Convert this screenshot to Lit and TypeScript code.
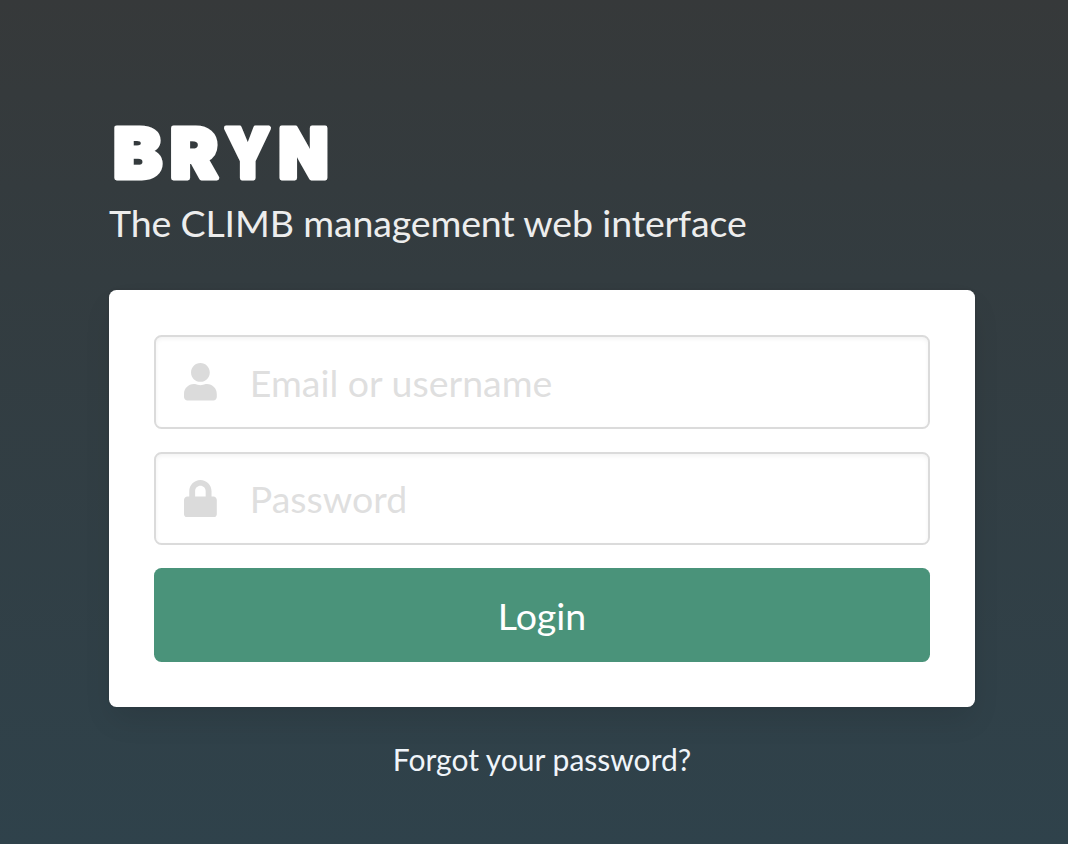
import { LitElement, html, css, svg } from "lit";
import { customElement, property } from "lit/decorators.js";

const ICONS = {
  user: svg`<path d="M224 256c70.7 0 128-57.3 128-128S294.7 0 224 0 96 57.3 96 128s57.3 128 128 128zm89.6 32h-16.7c-22.2 10.2-46.9 16-72.9 16s-50.6-5.8-72.9-16h-16.7C60.2 288 0 348.2 0 422.4V464c0 26.5 21.5 48 48 48h352c26.5 0 48-21.5 48-48v-41.6c0-74.2-60.2-134.4-134.4-134.4z"/>`,
  lock: svg`<path d="M400 224h-24v-72C376 68.2 307.8 0 224 0S72 68.2 72 152v72H48c-26.5 0-48 21.5-48 48v192c0 26.5 21.5 48 48 48h352c26.5 0 48-21.5 48-48V272c0-26.5-21.5-48-48-48zm-104 0H152v-72c0-39.7 32.3-72 72-72s72 32.3 72 72v72z"/>`,
};

// Wordmark letters: centre of each glyph and its horizontal stretch.
const WORDMARK = [
  { letter: "B", x: 28.6, stretch: 1.06 },
  { letter: "R", x: 85, stretch: 1.04 },
  { letter: "Y", x: 138.5, stretch: 0.86 },
  { letter: "N", x: 194.5, stretch: 0.94 },
];

@customElement("icon-field")
class IconField extends LitElement {
  @property() icon: keyof typeof ICONS = "user";
  @property() type = "text";
  @property() placeholder = "";

  static styles = css`
    :host {
      display: block;
    }
    .control {
      display: flex;
      align-items: center;
      box-sizing: border-box;
      height: 93.75px;
      border: 2px solid #dbdbdb;
      border-radius: 7.5px;
      background: #fff;
      box-shadow: inset 0 2px 4px rgba(10, 10, 10, 0.05);
    }
    .icon {
      flex: none;
      width: 32.8px;
      height: 37.5px;
      margin: 0 33px 0 28px;
      fill: #dbdbdb;
    }
    .input {
      flex: 1;
      min-width: 0;
      height: 100%;
      padding: 0;
      border: 0;
      outline: 0;
      background: none;
      color: #363636;
      font: 400 37.5px Lato, sans-serif;
    }
    .input::placeholder {
      color: #dfdfdf;
      opacity: 1;
    }
  `;

  render() {
    return html`
      <div class="control">
        <svg class="icon" viewBox="0 0 448 512">${ICONS[this.icon]}</svg>
        <input class="input" type=${this.type} placeholder=${this.placeholder} />
      </div>
    `;
  }
}

@customElement("app-root")
class AppRoot extends LitElement {
  static styles = css`
    :host {
      display: block;
      font-family: Lato, sans-serif;
    }
    .page {
      box-sizing: border-box;
      height: 844px;
      padding: 112px 93px 0 109px;
      overflow: hidden;
      background: linear-gradient(#36393a, #333c40 33%, #2f424b);
    }
    .title {
      height: 82px;
      margin: 0;
    }
    .wordmark {
      display: block;
      width: 230px;
      height: 82px;
    }
    .letter {
      fill: #fff;
      stroke: #fff;
      stroke-width: 4.8px;
      stroke-linejoin: round;
      font: 900 68.3px Inter, sans-serif;
      text-anchor: middle;
    }
    .subtitle {
      height: 56px;
      margin: 1px 0 39.3px;
      color: #ededed;
      font-size: 37.5px;
      font-weight: 400;
      line-height: 56px;
      letter-spacing: -0.14px;
      white-space: nowrap;
    }
    .card {
      display: flex;
      flex-direction: column;
      gap: 22.5px;
      padding: 45px;
      border-radius: 7.5px;
      background: #fff;
      box-shadow: 0 15px 30px -4px rgba(10, 10, 10, 0.1), 0 0 0 2px rgba(10, 10, 10, 0.02);
    }
    .login {
      height: 93.75px;
      padding: 2px 0 0;
      border: 0;
      border-radius: 7.5px;
      background: #4a937a;
      color: #fff;
      font: 400 37.5px Lato, sans-serif;
    }
    .forgot {
      display: block;
      margin-top: 30.8px;
      color: #f0f5fa;
      font-size: 30px;
      line-height: 45px;
      text-align: center;
      text-decoration: none;
    }
  `;

  render() {
    return html`
      <main class="page">
        <h1 class="title">
          <svg class="wordmark" viewBox="0 0 230 82">
            ${WORDMARK.map(
              ({ letter, x, stretch }) =>
                svg`<text class="letter" transform="translate(${x} 65.6) scale(${stretch} 1)">${letter}</text>`
            )}
          </svg>
        </h1>
        <p class="subtitle">The CLIMB management web interface</p>
        <form class="card">
          <icon-field icon="user" placeholder="Email or username"></icon-field>
          <icon-field icon="lock" type="password" placeholder="Password"></icon-field>
          <button class="login" type="button">Login</button>
        </form>
        <a class="forgot" href="#">Forgot your password?</a>
      </main>
    `;
  }
}
